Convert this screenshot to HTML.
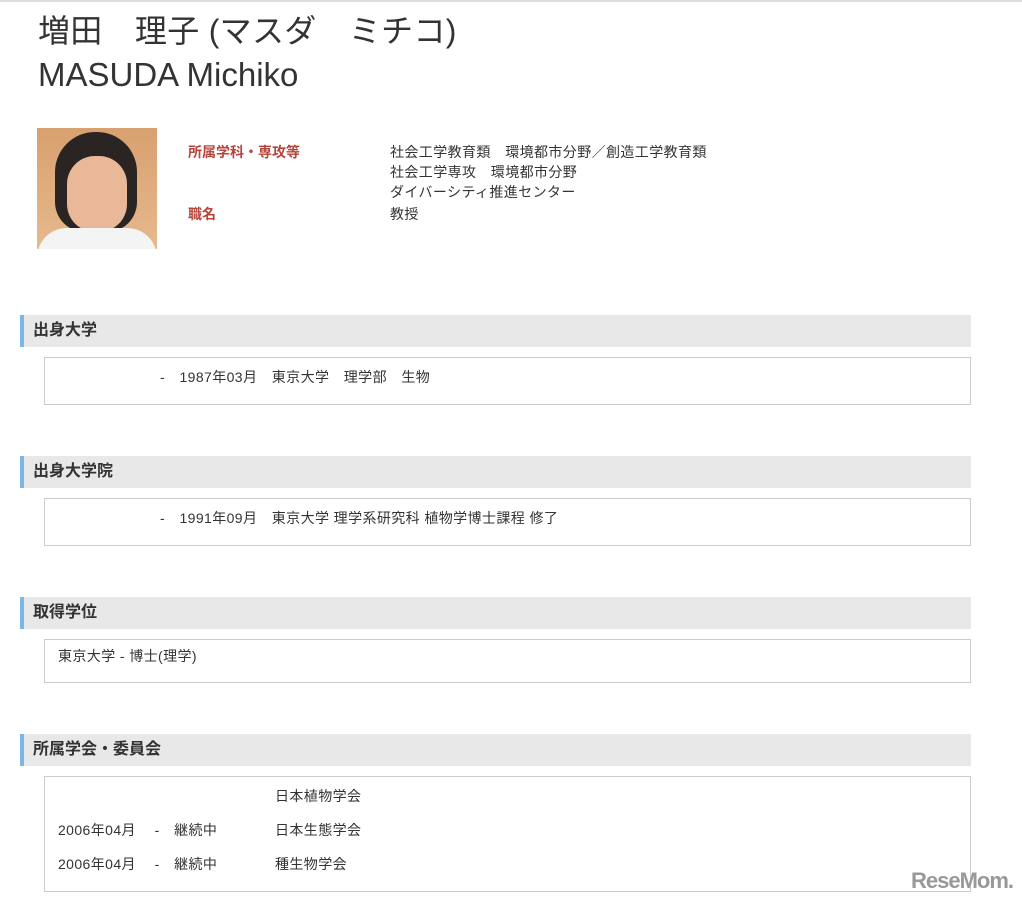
<!DOCTYPE html><html><head><meta charset="utf-8"><style>
body{margin:0;width:1022px;height:905px;background:#fff;font-family:"Liberation Sans","Noto Sans CJK JP",sans-serif;color:#333;position:relative;overflow:hidden}
.a{position:absolute;white-space:nowrap}
.h{position:absolute;left:20px;height:32px;background:#e8e8e8;border-left:4px solid #7ab6e6;font-size:16px;font-weight:bold;line-height:32px;padding-left:9px;box-sizing:border-box;width:951px}
.b{position:absolute;left:44px;width:927px;border:1px solid #ccc;box-sizing:border-box}
.t{font-size:14px;color:#333;letter-spacing:0.4px}
.r{font-size:14px;color:#b5443a;font-weight:bold}
</style></head><body>
<div class="a" style="left:0;top:0;width:1022px;height:2px;background:#ddd"></div>
<div class="a" style="left:38px;top:6px;font-size:32px;color:#333;letter-spacing:0.3px">増田　理子 (マスダ　ミチコ)</div>
<div class="a" style="left:38px;top:56px;font-size:33px;color:#333">MASUDA Michiko</div>
<div class="a" style="left:37px;top:128px;width:120px;height:121px;background:linear-gradient(#d9a070,#e6b98c);overflow:hidden">
<div style="position:absolute;left:18px;top:4px;width:82px;height:100px;border-radius:40px 40px 30px 30px;background:#2a2522"></div>
<div style="position:absolute;left:30px;top:28px;width:60px;height:76px;border-radius:28px;background:#e9b898"></div>
<div style="position:absolute;left:0;top:100px;width:120px;height:30px;background:#f4f4f4;border-radius:30px 30px 0 0"></div></div>
<div class="a r" style="left:188px;top:142px">所属学科・専攻等</div>
<div class="a r" style="left:188px;top:204px">職名</div>
<div class="a t" style="left:390px;top:142px;line-height:20px">社会工学教育類　環境都市分野／創造工学教育類<br>社会工学専攻　環境都市分野<br>ダイバーシティ推進センター</div>
<div class="a t" style="left:390px;top:204px">教授</div>

<div class="h" style="top:315px">出身大学</div>
<div class="b" style="top:357px;height:48px"></div>
<div class="a t" style="left:160px;top:367px">-　1987年03月　東京大学　理学部　生物</div>

<div class="h" style="top:456px">出身大学院</div>
<div class="b" style="top:498px;height:48px"></div>
<div class="a t" style="left:160px;top:508px">-　1991年09月　東京大学  理学系研究科  植物学博士課程  修了</div>

<div class="h" style="top:597px">取得学位</div>
<div class="b" style="top:639px;height:44px"></div>
<div class="a t" style="left:58px;top:646px">東京大学 -  博士(理学)</div>

<div class="h" style="top:734px">所属学会・委員会</div>
<div class="b" style="top:776px;height:116px"></div>
<div class="a t" style="left:275px;top:786px">日本植物学会</div>
<div class="a t" style="left:58px;top:820px">2006年04月　 -　継続中</div>
<div class="a t" style="left:275px;top:820px">日本生態学会</div>
<div class="a t" style="left:58px;top:854px">2006年04月　 -　継続中</div>
<div class="a t" style="left:275px;top:854px">種生物学会</div>
<div class="a" style="left:911px;top:868px;font-size:22px;font-weight:bold;color:#999;letter-spacing:-1px">ReseMom.</div>
</body></html>
